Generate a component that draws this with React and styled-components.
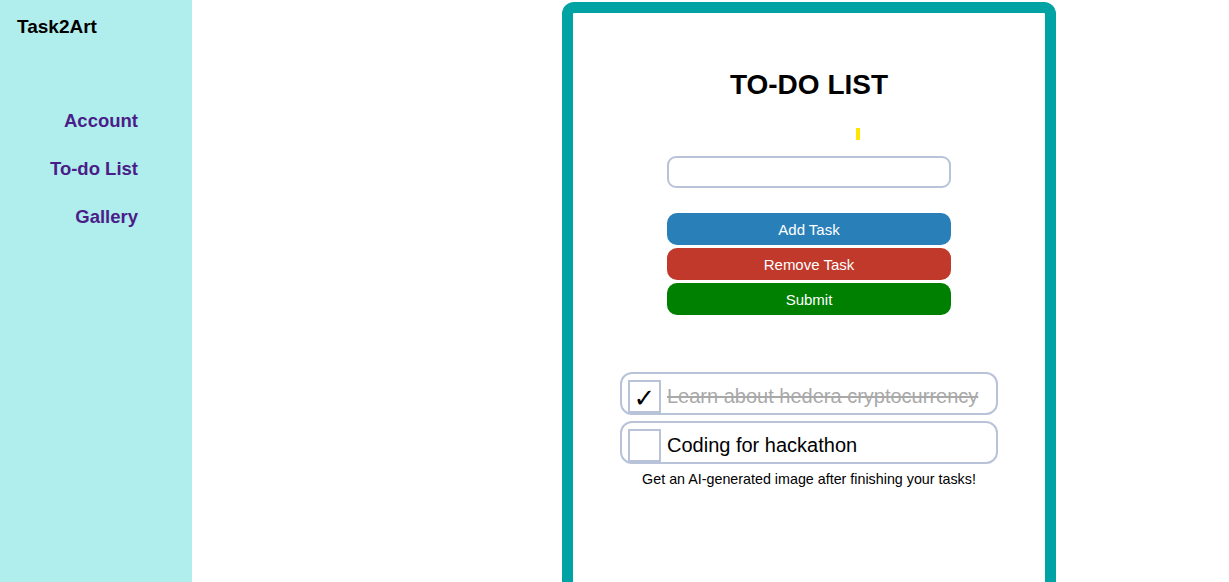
import React, { useState } from "react";
import styled, { createGlobalStyle } from "styled-components";

const GlobalStyle = createGlobalStyle`
  html, body {
    margin: 0;
    padding: 0;
    height: 100%;
    overflow: hidden;
  }
  body {
    font-family: "Liberation Sans", Arial, sans-serif;
    background: #ffffff;
  }
`;

const Page = styled.div`
  display: flex;
  width: 100%;
  height: 100vh;
  overflow: hidden;
`;

const Sidebar = styled.nav`
  width: 192px;
  flex-shrink: 0;
  background-color: #b0eeee;
  display: flex;
  flex-direction: column;
`;

const Brand = styled.div`
  font-size: 19px;
  font-weight: 700;
  color: #000;
  padding: 16px 0 0 17px;
  line-height: 22px;
`;

const NavList = styled.div`
  display: flex;
  flex-direction: column;
  align-items: flex-end;
  gap: 27px;
  padding: 72px 54px 0 0;
`;

const NavLink = styled.a`
  font-size: 18.5px;
  font-weight: 700;
  color: #4a1d88;
  text-decoration: none;
  line-height: 21px;
  cursor: pointer;
`;

const Main = styled.main`
  flex: 1;
  padding: 2px 0 0 370px;
`;

const Card = styled.section`
  width: 472px;
  height: 600px;
  border: 11px solid #00a3a3;
  border-radius: 12px;
  display: flex;
  flex-direction: column;
  align-items: center;
`;

const Title = styled.h1`
  margin: 56px 0 0;
  font-size: 28px;
  font-weight: 700;
  line-height: 32px;
  color: #000;
`;

const Caret = styled.span`
  display: block;
  width: 4px;
  height: 12px;
  background: #ffe600;
  margin: 27px 0 0 98px;
`;

const TaskInput = styled.input`
  box-sizing: border-box;
  width: 284px;
  height: 32px;
  margin-top: 16px;
  border: 2px solid #b8c2d8;
  border-radius: 9px;
  outline: none;
  font-size: 16px;
  padding: 0 8px;
`;

const ButtonStack = styled.div`
  display: flex;
  flex-direction: column;
  gap: 3px;
  margin-top: 25px;
`;

const ActionButton = styled.button`
  width: 284px;
  height: 32px;
  border: none;
  border-radius: 10px;
  background: ${(p) => p.$bg};
  color: #fff;
  font-family: "Liberation Sans", Arial, sans-serif;
  font-size: 15px;
  cursor: pointer;
`;

const TaskList = styled.ul`
  list-style: none;
  margin: 57px 0 0;
  padding: 0;
  display: flex;
  flex-direction: column;
  gap: 6px;
`;

const TaskRow = styled.li`
  box-sizing: border-box;
  width: 378px;
  height: 43px;
  border: 2px solid #b8c2d8;
  border-radius: 12px;
  display: flex;
  align-items: center;
  padding: 6px 0 0 6px;
  gap: 6px;
  cursor: pointer;
`;

const CheckBox = styled.span`
  box-sizing: border-box;
  width: 33px;
  height: 33px;
  border: 2px solid #b8c2d8;
  display: flex;
  align-items: center;
  justify-content: center;
  padding-top: 3px;
  font-size: 26px;
  font-weight: 700;
  color: #000;
  font-family: "DejaVu Sans", sans-serif;
`;

const TaskText = styled.span`
  font-size: 20px;
  color: ${(p) => (p.$done ? "#a9a9a9" : "#000")};
  text-decoration: ${(p) => (p.$done ? "line-through" : "none")};
  white-space: nowrap;
`;

const Note = styled.p`
  margin: 7px 0 0;
  font-size: 14.3px;
  color: #000;
`;

const initialTasks = [
  { id: 1, text: "Learn about hedera cryptocurrency", done: true },
  { id: 2, text: "Coding for hackathon", done: false },
];

export default function App() {
  const [tasks, setTasks] = useState(initialTasks);
  const [value, setValue] = useState("");

  const toggle = (id) =>
    setTasks(tasks.map((t) => (t.id === id ? { ...t, done: !t.done } : t)));

  return (
    <Page>
      <GlobalStyle />
      <Sidebar>
        <Brand>Task2Art</Brand>
        <NavList>
          <NavLink>Account</NavLink>
          <NavLink>To-do List</NavLink>
          <NavLink>Gallery</NavLink>
        </NavList>
      </Sidebar>
      <Main>
        <Card>
          <Title>TO-DO LIST</Title>
          <Caret />
          <TaskInput value={value} onChange={(e) => setValue(e.target.value)} />
          <ButtonStack>
            <ActionButton $bg="#2980b9">Add Task</ActionButton>
            <ActionButton $bg="#c0392b">Remove Task</ActionButton>
            <ActionButton $bg="#008000">Submit</ActionButton>
          </ButtonStack>
          <TaskList>
            {tasks.map((t) => (
              <TaskRow key={t.id} onClick={() => toggle(t.id)}>
                <CheckBox>{t.done ? "✓" : ""}</CheckBox>
                <TaskText $done={t.done}>{t.text}</TaskText>
              </TaskRow>
            ))}
          </TaskList>
          <Note>Get an AI-generated image after finishing your tasks!</Note>
        </Card>
      </Main>
    </Page>
  );
}
